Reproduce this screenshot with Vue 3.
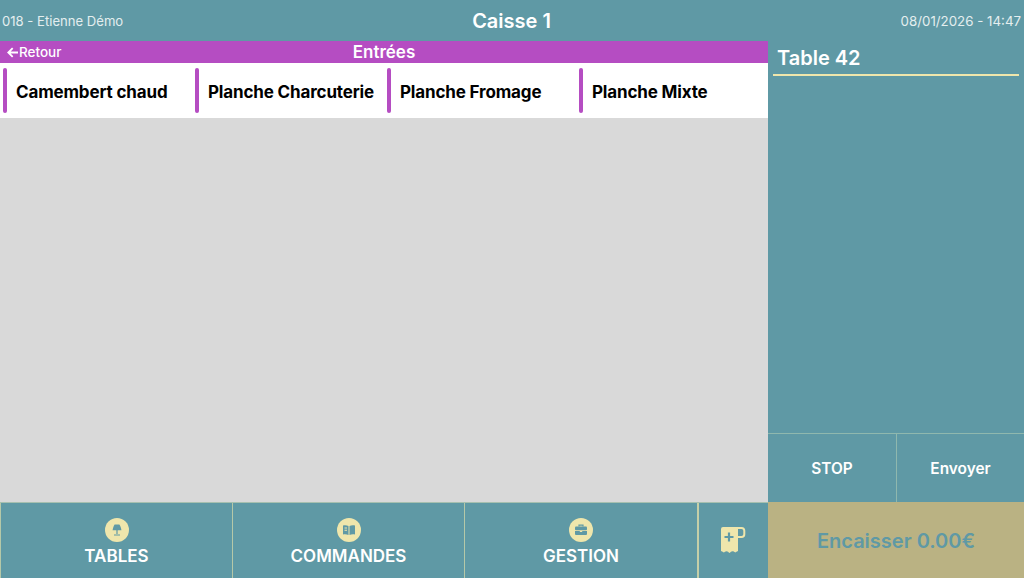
<template>
  <div class="caisse">
    <header class="top">
      <span class="top-side top-left">018 - Etienne Démo</span>
      <span class="top-title">Caisse 1</span>
      <span class="top-side top-right">08/01/2026 - 14:47</span>
    </header>

    <div class="body">
      <main class="left">
        <div class="cat-bar">
          <span class="back">
            <svg width="11" height="11" viewBox="0 0 12 12" fill="none">
              <path d="M12 6H1.800M6.200 1.200 1.400 6l4.800 4.800" stroke="currentColor" stroke-width="2" />
            </svg>
            Retour
          </span>
          <span class="cat-title">Entrées</span>
        </div>

        <div class="products">
          <div v-for="p in products" :key="p" class="product">
            <span class="accent"></span>
            <span class="product-name">{{ p }}</span>
          </div>
        </div>

        <div class="empty"></div>

        <nav class="nav">
          <div class="nav-item">
            <span class="nav-icon">
              <!-- lampe -->
              <svg width="14" height="14" viewBox="0 0 14 14">
                <path d="M4.600 1.500h4.800c1 1.600 1.800 3.600 2 5.700H2.600c.2-2.100 1-4.100 2-5.700z" fill="#5f99a5" />
                <path d="M6.400 7h1.200v4H6.400zM4 11.500h6v1H4z" fill="#5f99a5" />
              </svg>
            </span>
            <span class="nav-label">TABLES</span>
          </div>
          <div class="nav-item">
            <span class="nav-icon">
              <!-- livre -->
              <svg width="14" height="14" viewBox="0 0 14 14">
                <path d="M1 2.500c2-.5 4-.3 5.500.6V12c-1.500-.8-3.500-1-5.500-.6z" fill="#5f99a5" />
                <path d="M13 2.500c-2-.5-4-.3-5.500.6V12c1.500-.8 3.500-1 5.500-.6z" fill="#5f99a5" />
                <path d="M2.500 4.500h2.500v1H2.500zM2.500 6.700h2.500v1H2.500z" fill="#efe6ac" />
              </svg>
            </span>
            <span class="nav-label">COMMANDES</span>
          </div>
          <div class="nav-item">
            <span class="nav-icon">
              <!-- mallette -->
              <svg width="14" height="14" viewBox="0 0 14 14">
                <path d="M5 3.500V2.200h4v1.300" fill="none" stroke="#5f99a5" stroke-width="1.200" />
                <rect x="1" y="3.500" width="12" height="3.800" rx="1" fill="#5f99a5" />
                <path d="M1 8h4.800v1h2.400V8H13v3a1 1 0 0 1-1 1H2a1 1 0 0 1-1-1z" fill="#5f99a5" />
              </svg>
            </span>
            <span class="nav-label">GESTION</span>
          </div>
          <div class="nav-item nav-add">
            <!-- ticket + -->
            <svg class="add-icon" width="28" height="28" viewBox="0 0 28 28">
              <path d="M18 2h4.500a2.800 2.800 0 0 1 2.800 2.800v3.400a2.800 2.800 0 0 1-2.800 2.800H18" fill="none" stroke="#efe6ac" stroke-width="2" />
              <path d="M4 1h15v24c-1 .3-2 1-2.800 1.500-.8-.6-1.500-1.300-2.700-1.300-1.200 0-2 1-3 1.800-1-.8-1.800-1.800-3-1.800-1.200 0-2 .8-2.700 1.300-.6-.5-1.600-1.200-2.800-1.500V3a2 2 0 0 1 2-2z" fill="#efe6ac" />
              <path d="M10 6.500v9M5.500 11h9" stroke="#5f99a5" stroke-width="2.200" />
            </svg>
          </div>
        </nav>
      </main>

      <aside class="right">
        <div class="table-name">Table 42</div>
        <div class="lines"></div>
        <div class="actions">
          <div class="action">STOP</div>
          <div class="action">Envoyer</div>
        </div>
        <div class="pay">Encaisser 0.00€</div>
      </aside>
    </div>
  </div>
</template>

<script setup>
const products = ['Camembert chaud', 'Planche Charcuterie', 'Planche Fromage', 'Planche Mixte']
</script>

<style scoped>
.caisse {
  width: 1024px;
  height: 578px;
  display: flex;
  flex-direction: column;
  background: #5f99a5;
  font-family: Inter, "Liberation Sans", sans-serif;
  color: #fff;
  overflow: hidden;
}

.top {
  height: 41px;
  flex: none;
  display: grid;
  grid-template-columns: 1fr auto 1fr;
  align-items: center;
  padding: 0 3px 0 2px;
}

.top-side {
  font-size: 13.3px;
  color: #e4eeef;
}

.top-left {
  font-size: 13.1px;
}

.top-right {
  text-align: right;
}

.top-title {
  font-size: 20px;
  font-weight: 600;
}

.body {
  flex: 1;
  display: flex;
  min-height: 0;
}

.left {
  width: 768px;
  flex: none;
  display: flex;
  flex-direction: column;
}

.cat-bar {
  position: relative;
  height: 22px;
  flex: none;
  background: #b54dc2;
  display: flex;
  align-items: center;
  justify-content: center;
}

.back {
  position: absolute;
  left: 7px;
  top: 3px;
  display: flex;
  align-items: center;
  gap: 1px;
  font-size: 13.5px;
  font-weight: 500;
}

.cat-title {
  font-size: 17px;
  font-weight: 600;
}

.products {
  height: 55px;
  flex: none;
  background: #fff;
  display: grid;
  grid-template-columns: repeat(4, 192px);
  align-items: center;
}

.product {
  height: 45px;
  margin-left: 2.500px;
  display: flex;
  align-items: center;
  gap: 9.500px;
  font-size: 17px;
  font-weight: 700;
  letter-spacing: -0.15px;
  color: #000;
  white-space: nowrap;
}

.product-name {
  padding-top: 2px;
}

.accent {
  width: 4px;
  height: 45px;
  border-radius: 2px;
  background: #b54dc2;
  flex: none;
}

.empty {
  flex: 1;
  background: #d9d9d9;
}

.nav {
  height: 76px;
  flex: none;
  display: grid;
  grid-template-columns: 232px 232px 233px 71px;
  box-sizing: border-box;
  border-top: 1px solid #a6c0b0;
}

.nav-item {
  box-sizing: border-box;
  border-left: 1px solid #b5c8a8;
  display: flex;
  flex-direction: column;
  align-items: center;
  padding-top: 15px;
}

.nav-add {
  padding-top: 23px;
  border-left: 2px solid #c5cfa8;
}

.add-icon {
  margin-left: -2px;
}

.nav-icon {
  width: 24px;
  height: 24px;
  border-radius: 50%;
  background: #efe6ac;
  display: flex;
  align-items: center;
  justify-content: center;
}

.nav-label {
  margin-top: 4px;
  font-size: 17px;
  font-weight: 600;
}

.right {
  flex: 1;
  display: flex;
  flex-direction: column;
}

.table-name {
  margin: 0 5px;
  padding: 5px 0 0 4px;
  height: 35px;
  box-sizing: border-box;
  border-bottom: 2px solid #efe6ac;
  font-size: 20px;
  font-weight: 600;
}

.lines {
  flex: 1;
}

.actions {
  height: 69px;
  flex: none;
  display: grid;
  grid-template-columns: 128px 128px;
  box-sizing: border-box;
  border-top: 1px solid #8fb8ae;
}

.action {
  display: flex;
  align-items: center;
  justify-content: center;
  font-size: 15.400px;
  font-weight: 600;
}

.action + .action {
  border-left: 1px solid #8fb8ae;
}

.pay {
  height: 76px;
  flex: none;
  box-sizing: border-box;
  padding-top: 1px;
  background: #bab283;
  color: #5f99a5;
  display: flex;
  align-items: center;
  justify-content: center;
  font-size: 20px;
  font-weight: 600;
}
</style>

<style>
body {
  margin: 0;
}
</style>
